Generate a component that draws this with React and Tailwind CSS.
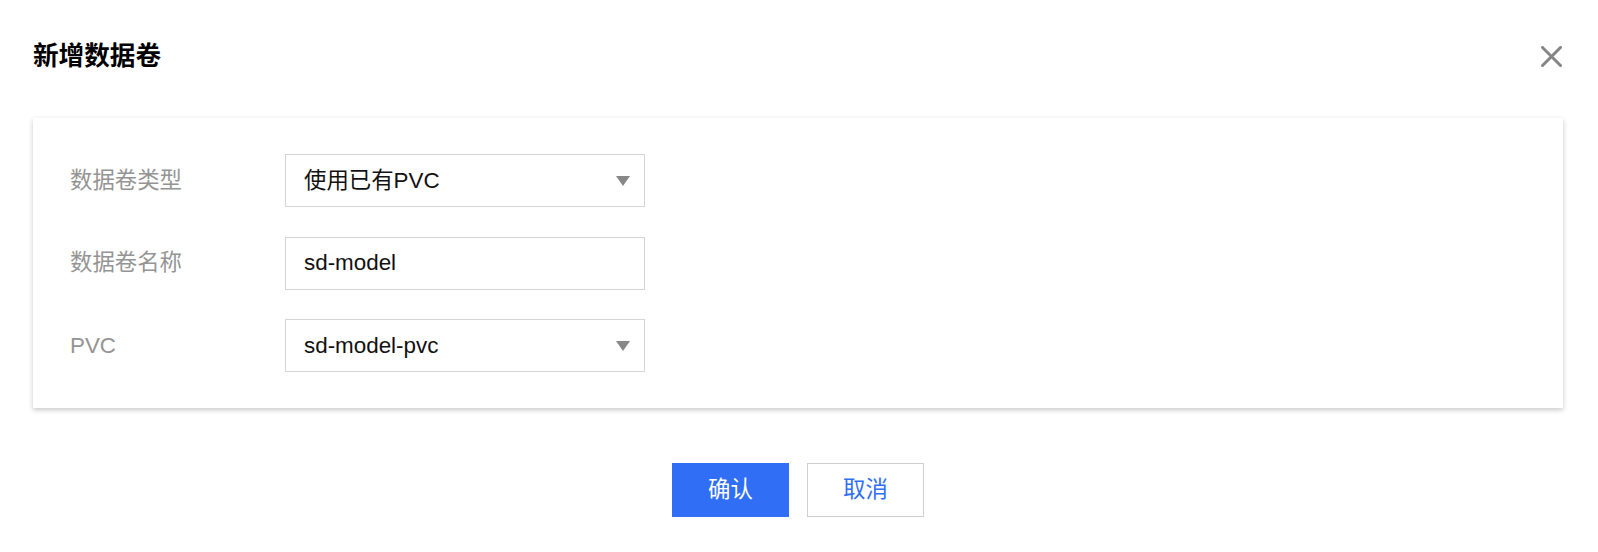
import React from "react";

function Caret() {
  return (
    <span className="block w-0 h-0 border-l-[7.5px] border-r-[7.5px] border-t-[10px] border-l-transparent border-r-transparent border-t-[#888888]" />
  );
}

function Field({ label, value, select }) {
  return (
    <div className="flex items-center">
      <div className="w-[252px] pl-[37px] text-[22.4px] leading-[30px] text-[#949494]">{label}</div>
      <div className="w-[360px] h-[53px] border border-[#d5d5d5] bg-white flex items-center justify-between pl-[18px] pr-[14px]">
        <span className="text-[22.4px] leading-[30px] text-[#111111]">{value}</span>
        {select ? <Caret /> : null}
      </div>
    </div>
  );
}

export default function App() {
  return (
    <div
      className="w-full h-[552px] bg-white flex flex-col"
      style={{ fontFamily: '"Liberation Sans", "Noto Sans CJK SC", sans-serif' }}
    >
      <div className="flex items-center justify-between h-[36px] mt-[38px] pl-[33px] pr-[36px]">
        <h1 className="text-[25.6px] leading-[36px] font-bold text-black">新增数据卷</h1>
        <svg width="21" height="21" viewBox="0 0 21 21" className="block">
          <path d="M1.5 1.5 L19.5 19.5 M19.5 1.5 L1.5 19.5" stroke="#858585" strokeWidth="3" strokeLinecap="square" />
        </svg>
      </div>

      <div className="mt-[44px] ml-[33px] mr-[35px] bg-white pt-[36px] pb-[36px] flex flex-col gap-[29.5px] shadow-[0_2px_5px_0_rgba(0,0,0,0.22)]">
        <Field label="数据卷类型" value="使用已有PVC" select />
        <Field label="数据卷名称" value="sd-model" />
        <Field label="PVC" value="sd-model-pvc" select />
      </div>

      <div className="mt-[55px] flex justify-center gap-[18px] pr-[2px]">
        <button className="w-[117px] h-[54px] bg-[#306ef6] text-white text-[22.4px] leading-[30px] flex items-center justify-center">
          确认
        </button>
        <button className="w-[117px] h-[54px] bg-white border border-[#cfcfcf] text-[#306ef6] text-[22.4px] leading-[30px] flex items-center justify-center">
          取消
        </button>
      </div>
    </div>
  );
}
